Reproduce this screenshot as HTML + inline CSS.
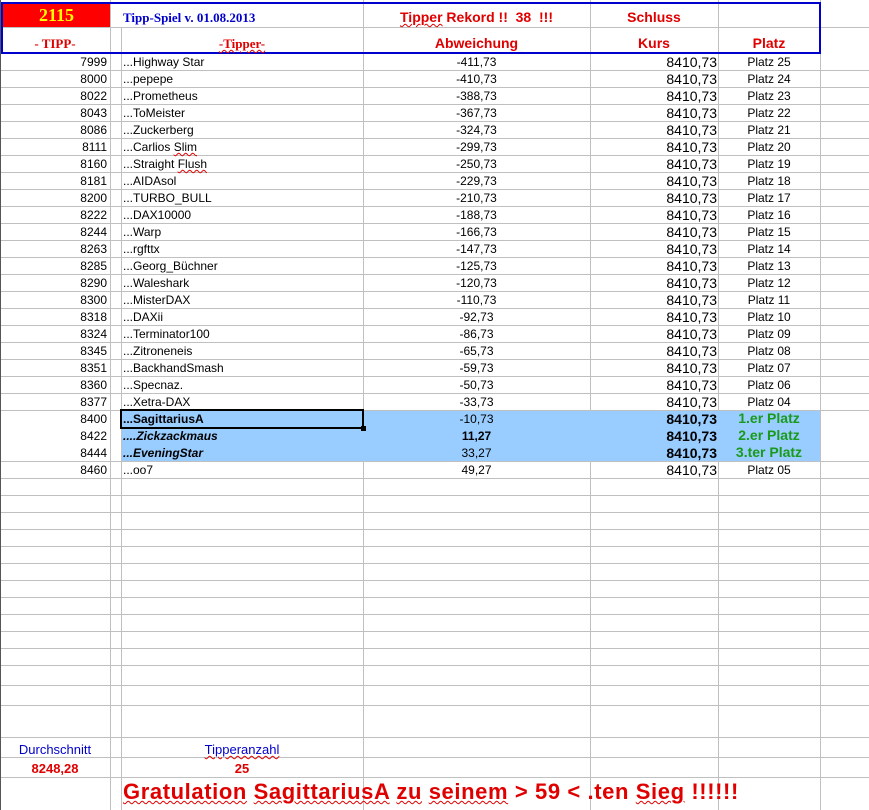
<!DOCTYPE html>
<html><head><meta charset="utf-8"><style>
*{margin:0;padding:0;box-sizing:border-box}
body{width:869px;height:810px;background:#fff;position:relative;overflow:hidden;font-family:"Liberation Sans",Arial,sans-serif;font-size:12px;color:#000}
.h{position:absolute;left:0;width:869px;height:1px;background:#c0c0c0}
.v{position:absolute;width:1px;background:#c0c0c0}
.t{position:absolute;white-space:nowrap;line-height:19px;height:17px}
.a{left:0;width:107px;text-align:right}
.b{left:123px}
.c{left:363px;width:227px;text-align:center}
.d{left:590px;width:127px;text-align:right;font-size:14px}
.e{left:718px;width:102px;text-align:center}
.hl{position:absolute;left:121px;width:699px;top:410px;height:51px;background:#99ccff}
.bold{font-weight:bold}
.it{font-style:italic;font-weight:bold}
.g{color:#1a9a1a;font-weight:bold;font-size:14px}
.r{color:#e00000;font-weight:bold}
.sq{text-decoration:underline wavy #e00000;text-decoration-thickness:1px}
</style></head><body>
<div class="hl"></div>
<div class="h" style="top:27px"></div>
<div class="h" style="top:70px"></div><div class="h" style="top:87px"></div><div class="h" style="top:104px"></div><div class="h" style="top:121px"></div><div class="h" style="top:138px"></div><div class="h" style="top:155px"></div><div class="h" style="top:172px"></div><div class="h" style="top:189px"></div><div class="h" style="top:206px"></div><div class="h" style="top:223px"></div><div class="h" style="top:240px"></div><div class="h" style="top:257px"></div><div class="h" style="top:274px"></div><div class="h" style="top:291px"></div><div class="h" style="top:308px"></div><div class="h" style="top:325px"></div><div class="h" style="top:342px"></div><div class="h" style="top:359px"></div><div class="h" style="top:376px"></div><div class="h" style="top:393px"></div><div class="h" style="top:410px"></div>
<div class="h" style="top:461px"></div><div class="h" style="top:478px"></div><div class="h" style="top:495px"></div><div class="h" style="top:512px"></div><div class="h" style="top:529px"></div><div class="h" style="top:546px"></div><div class="h" style="top:563px"></div><div class="h" style="top:580px"></div><div class="h" style="top:597px"></div><div class="h" style="top:614px"></div><div class="h" style="top:631px"></div><div class="h" style="top:648px"></div><div class="h" style="top:665px"></div><div class="h" style="top:685px"></div><div class="h" style="top:705px"></div><div class="h" style="top:737px"></div><div class="h" style="top:757px"></div><div class="h" style="top:777px"></div>
<div class="v" style="left:0;top:0;height:810px;background:#555"></div>
<div class="v" style="left:110px;top:0;height:810px"></div>
<div class="v" style="left:121px;top:27px;height:783px"></div>
<div class="v" style="left:363px;top:0;height:410px"></div><div class="v" style="left:363px;top:461px;height:349px"></div>
<div class="v" style="left:590px;top:0;height:410px"></div><div class="v" style="left:590px;top:461px;height:349px"></div>
<div class="v" style="left:718px;top:0;height:410px"></div><div class="v" style="left:718px;top:461px;height:349px"></div>
<div class="v" style="left:820px;top:0;height:810px"></div>
<div style="position:absolute;left:3px;top:3px;width:107px;height:24px;background:#ff0000"></div>
<div style="position:absolute;left:1px;top:2px;width:820px;height:52px;border:2px solid #0000cc"></div>
<div class="t" style="left:3px;width:107px;top:5px;text-align:center;font-family:'Liberation Serif',serif;font-weight:bold;font-size:18px;color:#ffff00;line-height:20px">2115</div>
<div class="t" style="left:123px;top:8px;font-family:'Liberation Serif',serif;font-weight:bold;font-size:13px;color:#0000cc">Tipp-Spiel v. 01.08.2013</div>
<div class="t r" style="left:363px;width:227px;text-align:center;top:8px;font-size:14px"><span class="sq">Tipper</span> Rekord !!&nbsp; 38&nbsp; !!!</div>
<div class="t r" style="left:590px;width:128px;text-align:center;top:8px;font-size:14px">Schluss</div>
<div class="t r" style="left:0;width:110px;text-align:center;top:34px;font-family:'Liberation Serif',serif;font-size:13px">- TIPP-</div>
<div class="t r" style="left:121px;width:242px;text-align:center;top:34px;font-family:'Liberation Serif',serif;font-size:13px"><span class="sq">-Tipper-</span></div>
<div class="t r" style="left:363px;width:227px;text-align:center;top:34px;font-size:14px">Abweichung</div>
<div class="t r" style="left:590px;width:128px;text-align:center;top:34px;font-size:14px">Kurs</div>
<div class="t r" style="left:718px;width:102px;text-align:center;top:34px;font-size:14px">Platz</div>
<div class="t a" style="top:53px">7999</div><div class="t b" style="top:53px">...Highway Star</div><div class="t c" style="top:53px">-411,73</div><div class="t d" style="top:53px">8410,73</div><div class="t e" style="top:53px">Platz 25</div>
<div class="t a" style="top:70px">8000</div><div class="t b" style="top:70px">...pepepe</div><div class="t c" style="top:70px">-410,73</div><div class="t d" style="top:70px">8410,73</div><div class="t e" style="top:70px">Platz 24</div>
<div class="t a" style="top:87px">8022</div><div class="t b" style="top:87px">...Prometheus</div><div class="t c" style="top:87px">-388,73</div><div class="t d" style="top:87px">8410,73</div><div class="t e" style="top:87px">Platz 23</div>
<div class="t a" style="top:104px">8043</div><div class="t b" style="top:104px">...ToMeister</div><div class="t c" style="top:104px">-367,73</div><div class="t d" style="top:104px">8410,73</div><div class="t e" style="top:104px">Platz 22</div>
<div class="t a" style="top:121px">8086</div><div class="t b" style="top:121px">...Zuckerberg</div><div class="t c" style="top:121px">-324,73</div><div class="t d" style="top:121px">8410,73</div><div class="t e" style="top:121px">Platz 21</div>
<div class="t a" style="top:138px">8111</div><div class="t b" style="top:138px">...Carlios <span class="sq">Slim</span></div><div class="t c" style="top:138px">-299,73</div><div class="t d" style="top:138px">8410,73</div><div class="t e" style="top:138px">Platz 20</div>
<div class="t a" style="top:155px">8160</div><div class="t b" style="top:155px">...Straight <span class="sq">Flush</span></div><div class="t c" style="top:155px">-250,73</div><div class="t d" style="top:155px">8410,73</div><div class="t e" style="top:155px">Platz 19</div>
<div class="t a" style="top:172px">8181</div><div class="t b" style="top:172px">...AIDAsol</div><div class="t c" style="top:172px">-229,73</div><div class="t d" style="top:172px">8410,73</div><div class="t e" style="top:172px">Platz 18</div>
<div class="t a" style="top:189px">8200</div><div class="t b" style="top:189px">...TURBO_BULL</div><div class="t c" style="top:189px">-210,73</div><div class="t d" style="top:189px">8410,73</div><div class="t e" style="top:189px">Platz 17</div>
<div class="t a" style="top:206px">8222</div><div class="t b" style="top:206px">...DAX10000</div><div class="t c" style="top:206px">-188,73</div><div class="t d" style="top:206px">8410,73</div><div class="t e" style="top:206px">Platz 16</div>
<div class="t a" style="top:223px">8244</div><div class="t b" style="top:223px">...Warp</div><div class="t c" style="top:223px">-166,73</div><div class="t d" style="top:223px">8410,73</div><div class="t e" style="top:223px">Platz 15</div>
<div class="t a" style="top:240px">8263</div><div class="t b" style="top:240px">...rgfttx</div><div class="t c" style="top:240px">-147,73</div><div class="t d" style="top:240px">8410,73</div><div class="t e" style="top:240px">Platz 14</div>
<div class="t a" style="top:257px">8285</div><div class="t b" style="top:257px">...Georg_Büchner</div><div class="t c" style="top:257px">-125,73</div><div class="t d" style="top:257px">8410,73</div><div class="t e" style="top:257px">Platz 13</div>
<div class="t a" style="top:274px">8290</div><div class="t b" style="top:274px">...Waleshark</div><div class="t c" style="top:274px">-120,73</div><div class="t d" style="top:274px">8410,73</div><div class="t e" style="top:274px">Platz 12</div>
<div class="t a" style="top:291px">8300</div><div class="t b" style="top:291px">...MisterDAX</div><div class="t c" style="top:291px">-110,73</div><div class="t d" style="top:291px">8410,73</div><div class="t e" style="top:291px">Platz 11</div>
<div class="t a" style="top:308px">8318</div><div class="t b" style="top:308px">...DAXii</div><div class="t c" style="top:308px">-92,73</div><div class="t d" style="top:308px">8410,73</div><div class="t e" style="top:308px">Platz 10</div>
<div class="t a" style="top:325px">8324</div><div class="t b" style="top:325px">...Terminator100</div><div class="t c" style="top:325px">-86,73</div><div class="t d" style="top:325px">8410,73</div><div class="t e" style="top:325px">Platz 09</div>
<div class="t a" style="top:342px">8345</div><div class="t b" style="top:342px">...Zitroneneis</div><div class="t c" style="top:342px">-65,73</div><div class="t d" style="top:342px">8410,73</div><div class="t e" style="top:342px">Platz 08</div>
<div class="t a" style="top:359px">8351</div><div class="t b" style="top:359px">...BackhandSmash</div><div class="t c" style="top:359px">-59,73</div><div class="t d" style="top:359px">8410,73</div><div class="t e" style="top:359px">Platz 07</div>
<div class="t a" style="top:376px">8360</div><div class="t b" style="top:376px">...Specnaz.</div><div class="t c" style="top:376px">-50,73</div><div class="t d" style="top:376px">8410,73</div><div class="t e" style="top:376px">Platz 06</div>
<div class="t a" style="top:393px">8377</div><div class="t b" style="top:393px">...Xetra-DAX</div><div class="t c" style="top:393px">-33,73</div><div class="t d" style="top:393px">8410,73</div><div class="t e" style="top:393px">Platz 04</div>
<div class="t a" style="top:410px">8400</div><div class="t b bold" style="top:410px">...SagittariusA</div><div class="t c" style="top:410px">-10,73</div><div class="t d bold" style="top:410px">8410,73</div><div class="t e g" style="top:409px">1.er Platz</div>
<div class="t a" style="top:427px">8422</div><div class="t b it" style="top:427px">....Zickzackmaus</div><div class="t c bold" style="top:427px">11,27</div><div class="t d bold" style="top:427px">8410,73</div><div class="t e g" style="top:426px">2.er Platz</div>
<div class="t a" style="top:444px">8444</div><div class="t b it" style="top:444px">...EveningStar</div><div class="t c" style="top:444px">33,27</div><div class="t d bold" style="top:444px">8410,73</div><div class="t e g" style="top:443px">3.ter Platz</div>
<div class="t a" style="top:461px">8460</div><div class="t b" style="top:461px">...oo7</div><div class="t c" style="top:461px">49,27</div><div class="t d" style="top:461px">8410,73</div><div class="t e" style="top:461px">Platz 05</div>
<div style="position:absolute;left:120px;top:409px;width:244px;height:20px;border:2px solid #000"></div>
<div style="position:absolute;left:361px;top:426px;width:5px;height:5px;background:#000"></div>
<div class="t" style="left:0;width:110px;text-align:center;top:740px;font-size:13px;color:#0000cc">Durchschnitt</div>
<div class="t r" style="left:0;width:110px;text-align:center;top:759px;font-size:13px">8248,28</div>
<div class="t" style="left:121px;width:242px;text-align:center;top:740px;font-size:13px;color:#0000cc"><span class="sq">Tipperanzahl</span></div>
<div class="t r" style="left:121px;width:242px;text-align:center;top:759px;font-size:13px">25</div>
<div class="t r" style="left:123px;top:779px;font-size:22px;letter-spacing:0.6px;line-height:26px;height:26px"><span class="sq">Gratulation</span> <span class="sq">SagittariusA</span> <span class="sq">zu</span> <span class="sq">seinem</span> &gt; 59 &lt; .ten <span class="sq">Sieg</span> !!!!!!</div>
</body></html>
